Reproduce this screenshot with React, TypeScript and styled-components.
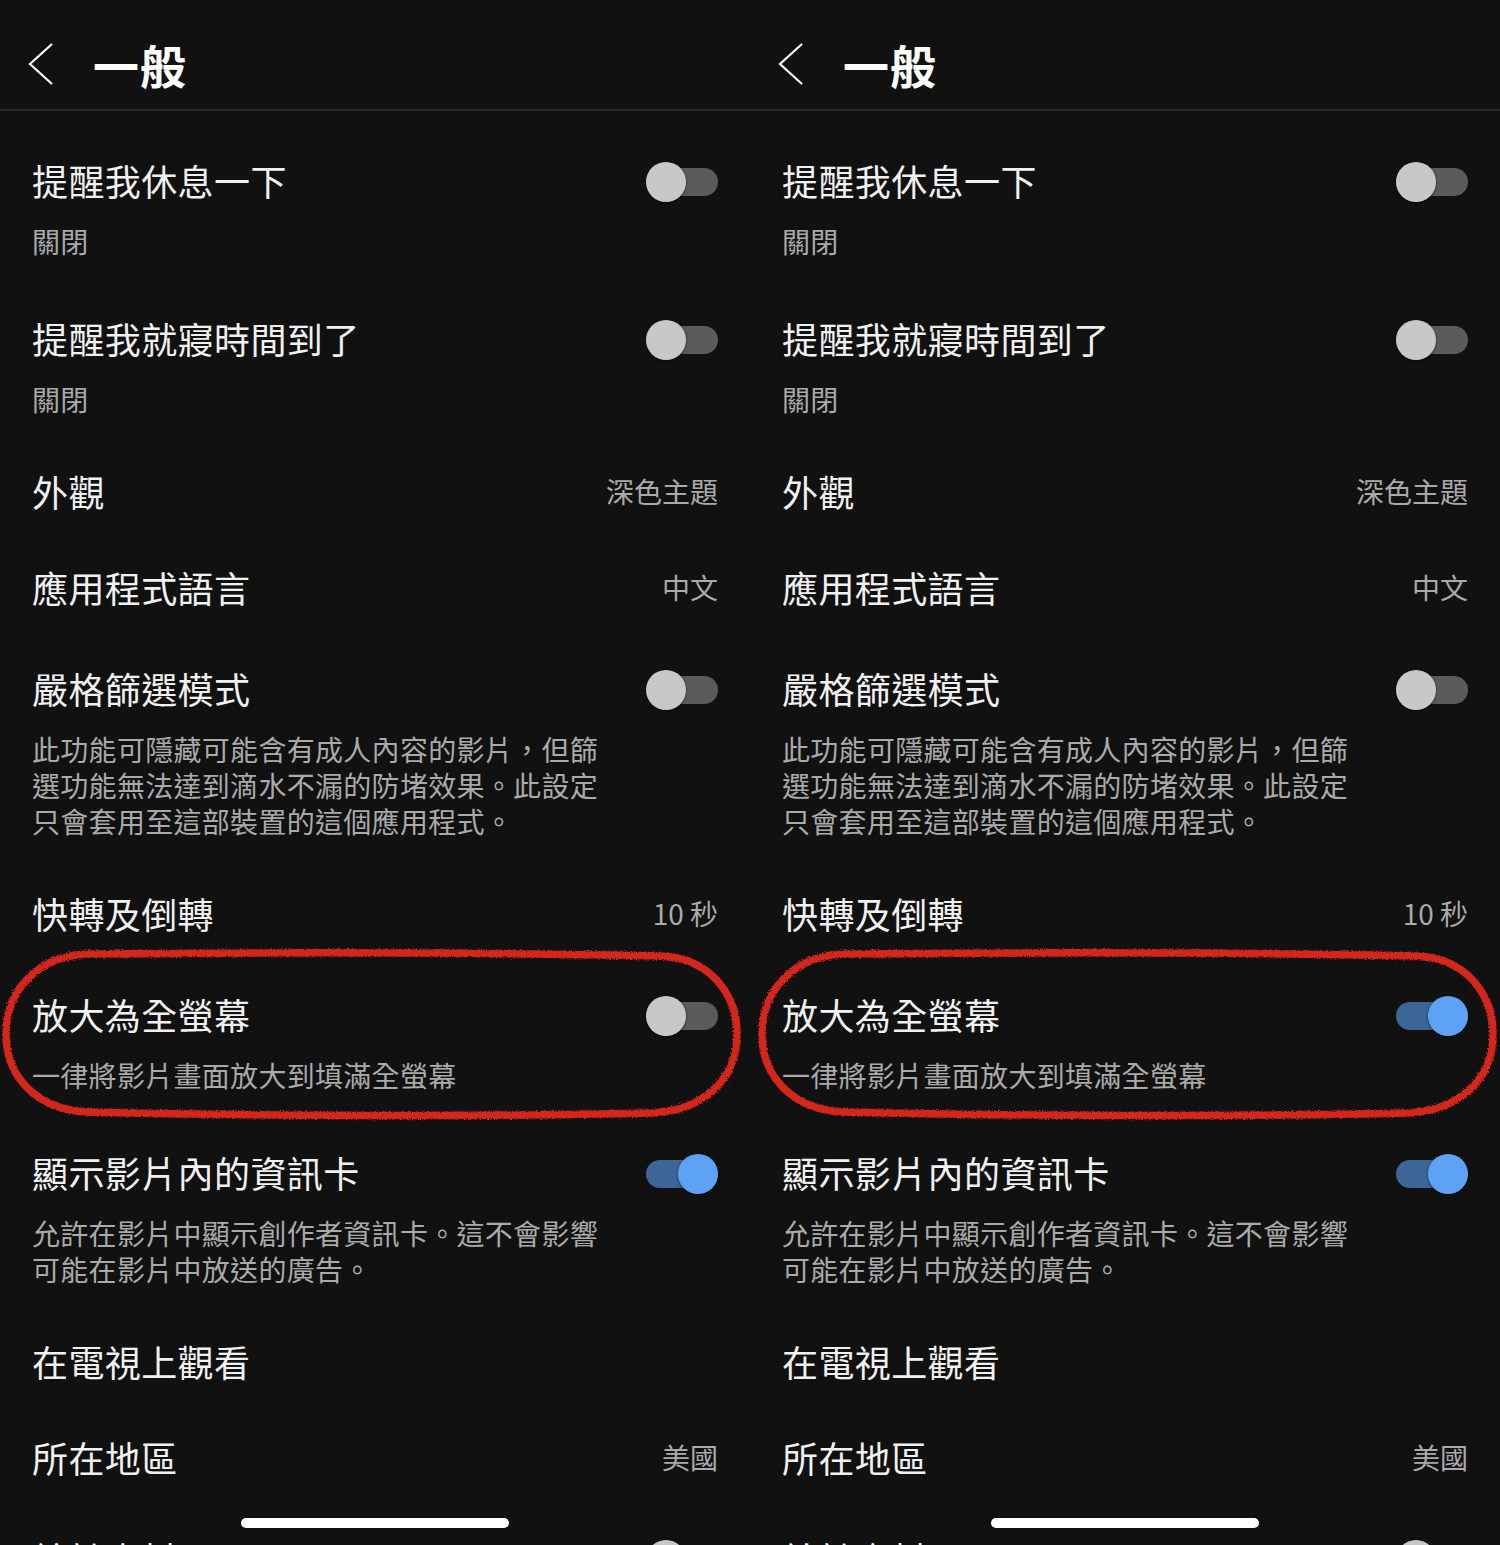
import React, { useId } from "react";
import styled, { createGlobalStyle } from "styled-components";

const GlobalStyle = createGlobalStyle`
  html, body {
    margin: 0;
    padding: 0;
    background: #111111;
  }
  body {
    font-family: "Noto Sans CJK TC", "Noto Sans", sans-serif;
    color: #f1f1f1;
  }
`;

type Row = {
  title: string;
  sub?: string;
  value?: string;
  toggle?: boolean;
};

const buildRows = (zoomOn: boolean): Row[] => [
  { title: "提醒我休息一下", sub: "關閉", toggle: false },
  { title: "提醒我就寢時間到了", sub: "關閉", toggle: false },
  { title: "外觀", value: "深色主題" },
  { title: "應用程式語言", value: "中文" },
  {
    title: "嚴格篩選模式",
    sub: "此功能可隱藏可能含有成人內容的影片，但篩選功能無法達到滴水不漏的防堵效果。此設定只會套用至這部裝置的這個應用程式。",
    toggle: false,
  },
  { title: "快轉及倒轉", value: "10 秒" },
  { title: "放大為全螢幕", sub: "一律將影片畫面放大到填滿全螢幕", toggle: zoomOn },
  {
    title: "顯示影片內的資訊卡",
    sub: "允許在影片中顯示創作者資訊卡。這不會影響可能在影片中放送的廣告。",
    toggle: true,
  },
  { title: "在電視上觀看" },
  { title: "所在地區", value: "美國" },
  { title: "統計資料", sub: "關閉", toggle: false },
];

const Switch: React.FC<{ on: boolean }> = ({ on }) => (
  <SwitchBox>
    <Track $on={on} />
    <Thumb $on={on} />
  </SwitchBox>
);

// 手繪紅圈標記
const Annotation: React.FC<{ shift: number }> = ({ shift }) => {
  const id = useId().replace(/:/g, "");
  return (
    <Mark $shift={shift} width="744" height="174" viewBox="0 0 744 174">
      <defs>
        <filter id={`rough${id}`} x="-5%" y="-10%" width="110%" height="120%">
          <feTurbulence type="fractalNoise" baseFrequency="0.8" numOctaves="2" seed="3" />
          <feDisplacementMap in="SourceGraphic" scale="4" />
        </filter>
      </defs>
      <path
        d="M88 6 C 300 4, 520 5, 660 8 C 712 10, 737 48, 737 86 C 737 130, 705 163, 650 165 C 480 169, 250 168, 88 164 C 36 162, 6 128, 6 86 C 6 42, 38 8, 88 6 Z"
        fill="none"
        stroke="#d5281f"
        strokeWidth="7.5"
        filter={`url(#rough${id})`}
      />
    </Mark>
  );
};

const Panel: React.FC<{ zoomOn: boolean; markShift: number }> = ({ zoomOn, markShift }) => {
  const rows = buildRows(zoomOn);
  return (
    <Screen>
      <Header>
        <svg width="26" height="42" viewBox="0 0 26 42">
          <polyline points="24,1 2,21 24,41" fill="none" stroke="#ffffff" strokeWidth="2.2" />
        </svg>
        <HeaderTitle>一般</HeaderTitle>
      </Header>
      <List>
        {rows.map((row) => (
          <Item key={row.title} $tall={!!row.sub}>
            <TextCol>
              <Title>{row.title}</Title>
              {row.sub && <Sub>{row.sub}</Sub>}
            </TextCol>
            {row.value && <Value>{row.value}</Value>}
            {row.toggle !== undefined && <Switch on={row.toggle} />}
          </Item>
        ))}
      </List>
      <Annotation shift={markShift} />
      <HomeBar />
    </Screen>
  );
};

const App: React.FC = () => (
  <>
    <GlobalStyle />
    <Page>
      <Panel zoomOn={false} markShift={0} />
      <Panel zoomOn={true} markShift={6} />
    </Page>
  </>
);

const Page = styled.div`
  display: flex;
  width: 1500px;
  height: 1545px;
  overflow: hidden;
  background: #111111;
`;

const Screen = styled.div`
  position: relative;
  width: 750px;
  height: 1545px;
  overflow: hidden;
  background: #111111;
`;

const Header = styled.div`
  display: flex;
  align-items: center;
  gap: 39px;
  height: 111px;
  box-sizing: border-box;
  padding: 18px 0 0 28px;
  border-bottom: 2px solid #2a2a2a;
`;

const HeaderTitle = styled.div`
  font-size: 46px;
  font-weight: 700;
  line-height: 56px;
  color: #ffffff;
  letter-spacing: 1px;
`;

const List = styled.div`
  display: flex;
  flex-direction: column;
  padding-top: 16px;
`;

const Item = styled.div<{ $tall: boolean }>`
  display: flex;
  justify-content: space-between;
  align-items: flex-start;
  padding: ${({ $tall }) => ($tall ? "31px" : "26px")} 32px 26px 32px;
`;

const TextCol = styled.div`
  display: flex;
  flex-direction: column;
  gap: 21px;
  max-width: 582px;
`;

const Title = styled.div`
  font-size: 36px;
  line-height: 44px;
  color: #f1f1f1;
  letter-spacing: 0.4px;
`;

const Sub = styled.div`
  font-size: 28px;
  line-height: 36px;
  color: #aaaaaa;
  letter-spacing: 0.3px;
`;

const Value = styled.div`
  font-size: 28px;
  line-height: 44px;
  color: #aaaaaa;
  white-space: nowrap;
`;

const SwitchBox = styled.div`
  position: relative;
  flex: none;
  width: 72px;
  height: 40px;
  margin-top: 4px;
`;

const Track = styled.div<{ $on: boolean }>`
  position: absolute;
  left: 0;
  right: 0;
  top: 6px;
  height: 28px;
  border-radius: 14px;
  background: ${({ $on }) => ($on ? "#3d6595" : "#5b5b5b")};
`;

const Thumb = styled.div<{ $on: boolean }>`
  position: absolute;
  top: 0;
  left: ${({ $on }) => ($on ? "32px" : "0")};
  width: 40px;
  height: 40px;
  border-radius: 50%;
  background: ${({ $on }) => ($on ? "#5ea2f6" : "#c6c8ca")};
  box-shadow: 0 1px 3px rgba(0, 0, 0, 0.5);
`;

const Mark = styled.svg<{ $shift: number }>`
  position: absolute;
  left: ${({ $shift }) => $shift}px;
  top: 948px;
  pointer-events: none;
`;

const HomeBar = styled.div`
  position: absolute;
  left: 241px;
  bottom: 17px;
  width: 268px;
  height: 10px;
  border-radius: 5px;
  background: #ffffff;
`;

export default App;
